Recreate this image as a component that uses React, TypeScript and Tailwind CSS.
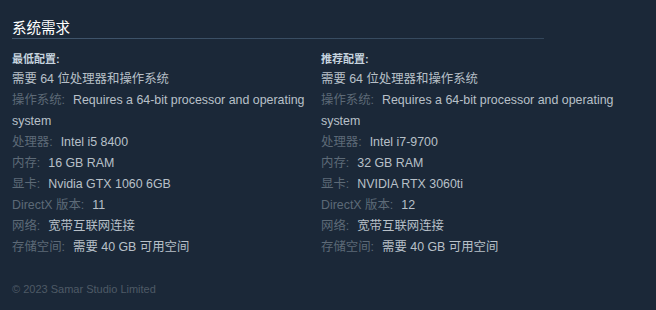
const font = 'font-["Liberation_Sans","Noto_Sans_CJK_SC",sans-serif]'

type Row = { label: string; value: string }

const minimum: Row[] = [
  { label: '操作系统:', value: 'Requires a 64-bit processor and operating system' },
  { label: '处理器:', value: 'Intel i5 8400' },
  { label: '内存:', value: '16 GB RAM' },
  { label: '显卡:', value: 'Nvidia GTX 1060 6GB' },
  { label: 'DirectX 版本:', value: '11' },
  { label: '网络:', value: '宽带互联网连接' },
  { label: '存储空间:', value: '需要 40 GB 可用空间' },
]

const recommended: Row[] = [
  { label: '操作系统:', value: 'Requires a 64-bit processor and operating system' },
  { label: '处理器:', value: 'Intel i7-9700' },
  { label: '内存:', value: '32 GB RAM' },
  { label: '显卡:', value: 'NVIDIA RTX 3060ti' },
  { label: 'DirectX 版本:', value: '12' },
  { label: '网络:', value: '宽带互联网连接' },
  { label: '存储空间:', value: '需要 40 GB 可用空间' },
]

function SpecColumn({ title, rows }: { title: string; rows: Row[] }) {
  return (
    <div className="w-[300px] shrink-0">
      <div className="text-[11px] font-bold leading-[14px] text-[#c6d4df]">{title}</div>
      <ul className="mt-[3px] text-[12.4px] leading-[21px] text-[#b8c0c8]">
        <li>需要 64 位处理器和操作系统</li>
        {rows.map((r) => (
          <li key={r.label}>
            <span className="text-[#5d6a77]">{r.label}</span>
            <span className="ml-[8px]">{r.value}</span>
          </li>
        ))}
      </ul>
    </div>
  )
}

export default function App() {
  return (
    <div className={`${font} w-[656px] h-[310px] bg-[#1b2838] overflow-hidden pl-3 pt-[18px]`}>
      <h2 className="text-[14.5px] leading-[20px] text-white">系统需求</h2>
      <div className="h-px w-[532px] bg-gradient-to-r from-[#41566d] to-[#33465a]" />
      <div className="flex gap-[9px] mt-[13px]">
        <SpecColumn title="最低配置:" rows={minimum} />
        <SpecColumn title="推荐配置:" rows={recommended} />
      </div>
      <div className="mt-[23px] text-[11px] text-[#4e5a66]">© 2023 Samar Studio Limited</div>
    </div>
  )
}
